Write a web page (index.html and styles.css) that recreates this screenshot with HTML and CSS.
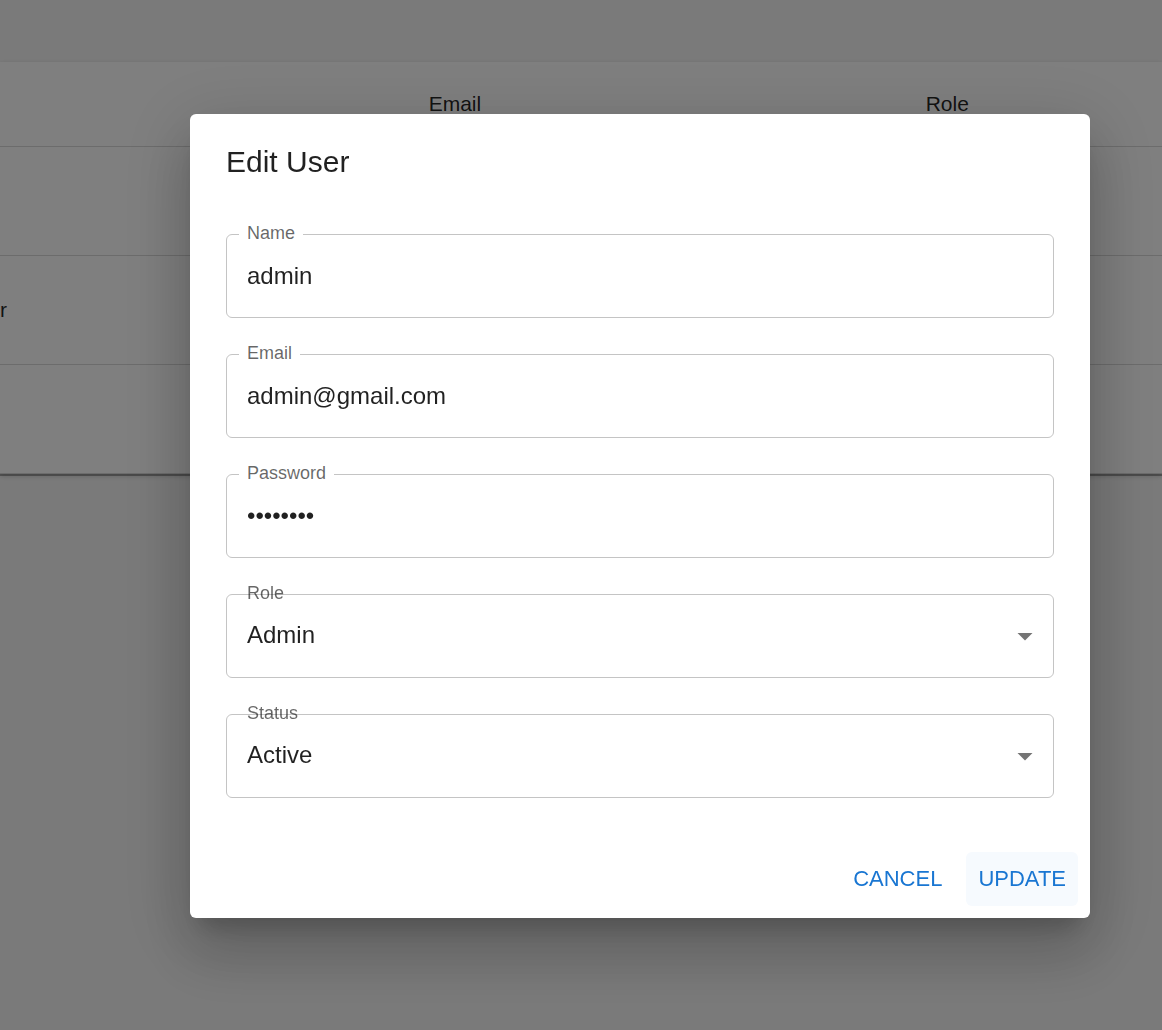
FILE: index.html
```html
<!DOCTYPE html>
<html lang="en">
<head>
  <meta charset="utf-8">
  <meta name="viewport" content="width=device-width, initial-scale=1">
  <title>Edit User</title>
  <link rel="stylesheet" href="styles.css">
</head>
<body>
  <main class="page">
    <div class="paper">
      <table class="users">
        <colgroup>
          <col class="col-name">
          <col class="col-email">
          <col class="col-role">
        </colgroup>
        <thead>
          <tr><th></th><th scope="col">Email</th><th scope="col">Role</th></tr>
        </thead>
        <tbody>
          <tr><td></td><td></td><td></td></tr>
          <tr><td>r</td><td></td><td></td></tr>
          <tr><td></td><td></td><td></td></tr>
        </tbody>
      </table>
    </div>
  </main>

  <div class="backdrop">
    <form class="dialog" role="dialog" aria-modal="true" aria-labelledby="dialog-title">
      <h2 class="dialog-title" id="dialog-title">Edit User</h2>
      <div class="dialog-content">
        <div class="field">
          <label class="label notched" for="name">Name</label>
          <input class="control" id="name" type="text" value="admin">
        </div>
        <div class="field">
          <label class="label notched" for="email">Email</label>
          <input class="control" id="email" type="email" value="admin@gmail.com">
        </div>
        <div class="field">
          <label class="label notched" for="password">Password</label>
          <input class="control" id="password" type="password" value="password">
        </div>
        <div class="field">
          <label class="label" for="role">Role</label>
          <select class="control select" id="role">
            <option selected>Admin</option>
            <option>User</option>
          </select>
          <svg class="arrow" viewBox="0 0 24 24" aria-hidden="true"><path d="M7 10l5 5 5-5z"/></svg>
        </div>
        <div class="field">
          <label class="label" for="status">Status</label>
          <select class="control select" id="status">
            <option selected>Active</option>
            <option>Inactive</option>
          </select>
          <svg class="arrow" viewBox="0 0 24 24" aria-hidden="true"><path d="M7 10l5 5 5-5z"/></svg>
        </div>
      </div>
      <div class="dialog-actions">
        <button class="button" type="button">CANCEL</button>
        <button class="button active" type="button">UPDATE</button>
      </div>
    </form>
  </div>
</body>
</html>
```
FILE: styles.css
```css
* {
  box-sizing: border-box;
}

body {
  margin: 0;
  background: #f5f5f5;
  color: rgba(0, 0, 0, 0.87);
  font-family: "Liberation Sans", Arial, sans-serif;
}

.page {
  padding: 62px 0;
}

/* Users table */
.paper {
  background: #fff;
  box-shadow:
    0 2px 0 0 rgba(0, 0, 0, 0.3),
    0 2px 5px 0 rgba(0, 0, 0, 0.2);
}

.users {
  width: 100%;
  table-layout: fixed;
  border-collapse: separate;
  border-spacing: 0;
  font-size: 21px;
  line-height: 32px;
}

.col-name {
  width: 35%;
}

.col-email {
  width: 497px;
}

.users th,
.users td {
  padding: 0 22px;
  border-bottom: 1px solid #d8d8d8;
  font-weight: 400;
  text-align: left;
}

.users th {
  height: 85px;
}

.users td {
  height: 109px;
}

.users td:first-child {
  padding-left: 0;
}

/* Dialog */
.backdrop {
  position: fixed;
  inset: 0;
  display: flex;
  align-items: flex-start;
  padding: 114px 72px 48px 190px;
  overflow: auto;
  background: rgba(0, 0, 0, 0.5);
}

.dialog {
  flex: 1;
  max-width: 900px;
  border-radius: 6px;
  background: #fff;
  box-shadow:
    0 17px 23px -11px rgba(0, 0, 0, 0.2),
    0 36px 57px 5px rgba(0, 0, 0, 0.14),
    0 14px 69px 12px rgba(0, 0, 0, 0.12);
}

.dialog-title {
  margin: 0;
  padding: 24px 36px;
  font-size: 30px;
  font-weight: 400;
  line-height: 48px;
}

.dialog-content {
  display: flex;
  flex-direction: column;
  gap: 36px;
  padding: 24px 36px 42px;
}

.field {
  position: relative;
  display: flex;
  height: 84px;
  border: 1px solid #c4c4c4;
  border-radius: 6px;
}

.label {
  position: absolute;
  top: -14px;
  left: 12px;
  padding: 0 8px;
  color: rgba(0, 0, 0, 0.6);
  font-size: 18px;
  line-height: 24px;
}

.notched {
  background: #fff;
}

.control {
  flex: 1;
  min-width: 0;
  padding: 0 20px;
  border: 0;
  border-radius: 6px;
  outline: 0;
  background: transparent;
  color: inherit;
  font: inherit;
  font-size: 24px;
}

.select {
  appearance: none;
  padding-bottom: 4px;
}

.arrow {
  position: absolute;
  top: 23px;
  right: 10px;
  width: 36px;
  height: 36px;
  fill: #757575;
  pointer-events: none;
}

.dialog-actions {
  display: flex;
  justify-content: flex-end;
  gap: 12px;
  padding: 12px;
}

.button {
  min-width: 96px;
  padding: 9px 12px;
  border: 0;
  border-radius: 6px;
  background: transparent;
  color: #1976d2;
  font: inherit;
  font-size: 22px;
  line-height: 36px;
  cursor: pointer;
}

.button.active,
.button:hover {
  background: #f6fafe;
}
```
